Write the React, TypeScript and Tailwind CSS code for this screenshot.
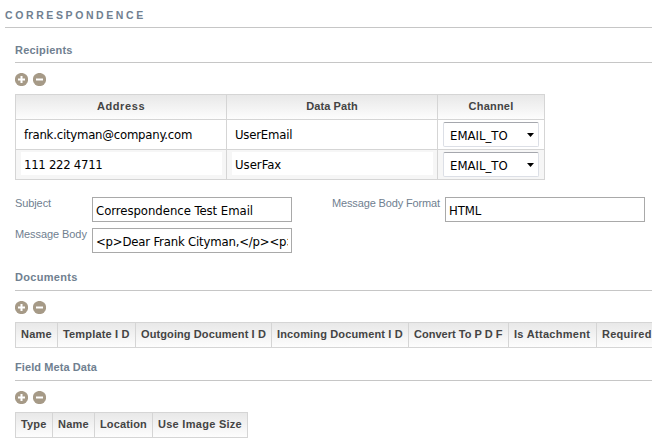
const label = "font-['Liberation_Sans',Arial,sans-serif] text-[11px] leading-[14px] whitespace-pre";
const value = "font-['DejaVu_Sans_Condensed','DejaVu_Sans',sans-serif] [font-stretch:condensed] text-[13px] leading-[16px] text-black whitespace-pre";

function Tools() {
  return (
    <div className="mt-[10px] flex h-[13px] gap-[5px]">
      {[true, false].map((plus) => (
        <svg key={String(plus)} width="13" height="13" viewBox="0 0 13 13" aria-hidden="true">
          <circle cx="6.5" cy="6.5" r="6.6" fill="#a69a87" />
          <path d={plus ? "M3 6.5h7M6.5 3v7" : "M3 6.5h7"} stroke="#fff" strokeWidth="2" fill="none" />
        </svg>
      ))}
    </div>
  );
}

function Heading({ text, height, track }: { text: string; height: string; track: string }) {
  return (
    <div className={`${height} border-b border-[#c6c6c6]`}>
      <h2 className={`${label} ${track} font-bold text-[#708090]`}>{text}</h2>
    </div>
  );
}

function Head({ text, width, track, center }: { text: string; width: string; track: string; center?: boolean }) {
  return (
    <div
      className={`${width} h-[24px] shrink-0 border-r border-[#d5d5d5] bg-linear-to-b from-[#e8e8e8] to-[#fdfdfd] pt-[4px] ${center ? "text-center" : "pl-[5px]"} ${label} ${track} font-bold text-[#444]`}
    >
      {text}
    </div>
  );
}

function Channel() {
  return (
    <div className="flex h-[25px] w-[96px] items-center justify-between rounded-[2px] border border-[#dcdfe6] border-t-[#a5a7ad] bg-white pr-[4px] pl-[6px]">
      <span className={`${value} pt-[2px]`}>EMAIL_TO</span>
      <svg width="7" height="4" viewBox="0 0 7 4" aria-hidden="true">
        <path d="M0 0h7L3.5 4z" fill="#000" />
      </svg>
    </div>
  );
}

function Row({ address, path, shaded, tracks }: { address: string; path: string; shaded?: boolean; tracks: string[] }) {
  const cell = "h-[29px] border-r border-[#d5d5d5] pl-[5px] pt-[2px]";
  return (
    <div className={`flex border-t border-[#d5d5d5] ${shaded ? "bg-[#f6f6f6]" : "bg-white"}`}>
      {[address, path].map((text, i) => (
        <div key={text} className={`${cell} w-[211px]`}>
          <div className={`h-[23px] w-[201px] bg-white pt-[5px] pl-[3px] ${value} ${tracks[i]}`}>{text}</div>
        </div>
      ))}
      <div className={`${cell} w-[107px]`}>
        <Channel />
      </div>
    </div>
  );
}

function Field({ name, text, labelWidth, track, nameTrack }: { name: string; text: string; labelWidth: string; track: string; nameTrack: string }) {
  return (
    <div className="flex">
      <label className={`${label} ${labelWidth} ${nameTrack} -mt-px shrink-0 text-[#708090]`}>{name}</label>
      <div className="h-[25px] w-[200px] border border-[#a9a9a9] bg-white px-[3px]">
        <div className={`${value} ${track} overflow-hidden pt-[5px]`}>{text}</div>
      </div>
    </div>
  );
}

export default function App() {
  return (
    <main className="h-[446px] w-[652px] overflow-hidden bg-white pl-[5px]">
      <h1 className="h-[28px] border-b border-[#c6c6c6] pt-[8px] font-['Liberation_Sans',Arial,sans-serif] text-[10.5px] leading-[14px] font-bold tracking-[2.6px] text-[#708090]">
        CORRESPONDENCE
      </h1>
      <div className="pl-[10px]">
        <section className="pt-[15px]">
          <Heading text="Recipients" height="h-[20px]" track="tracking-[0.2px]" />
          <Tools />
          <div className="mt-[8px] w-[530px] border-t border-b border-l border-[#d5d5d5]">
            <div className="flex">
              <Head text="Address" width="w-[211px]" track="tracking-[0.6px]" center />
              <Head text="Data Path" width="w-[211px]" track="tracking-[0.1px]" center />
              <Head text="Channel" width="w-[107px]" track="tracking-[0.2px]" center />
            </div>
            <Row address="frank.cityman@company.com" path="UserEmail" tracks={["tracking-[-0.22px]", "tracking-[-0.2px]"]} />
            <Row address="111 222 4711" path="UserFax" shaded tracks={["tracking-[-0.28px]", "tracking-[0px]"]} />
          </div>
        </section>
        <section className="mt-[17px] flex h-[56px] gap-[40px]">
          <div className="flex flex-col gap-[6px]">
            <Field name="Subject" text="Correspondence Test Email" labelWidth="w-[77px]" track="tracking-[-0.04px]" nameTrack="tracking-[-0.1px]" />
            <Field name="Message Body" text="<p>Dear Frank Cityman,</p><p>" labelWidth="w-[77px]" track="tracking-[-0.18px]" nameTrack="tracking-[-0.08px]" />
          </div>
          <Field name="Message Body Format" text="HTML" labelWidth="w-[113px]" track="tracking-[-0.1px]" nameTrack="tracking-[-0.14px]" />
        </section>
        <section className="pt-[17px]">
          <Heading text="Documents" height="h-[21px]" track="tracking-[0.3px]" />
          <Tools />
          <div className="mt-[8px] flex h-[26px] border-t border-b border-l border-[#d5d5d5]">
            <Head text="Name" width="w-[42px]" track="tracking-[0.2px]" />
            <Head text="Template I D" width="w-[78px]" track="tracking-[0.16px]" />
            <Head text="Outgoing Document I D" width="w-[136px]" track="tracking-[0.1px]" />
            <Head text="Incoming Document I D" width="w-[137px]" track="tracking-[0.14px]" />
            <Head text="Convert To P D F" width="w-[100px]" track="tracking-[0.02px]" />
            <Head text="Is Attachment" width="w-[88px]" track="tracking-[0.3px]" />
            <Head text="Required" width="w-[60px]" track="tracking-[0.24px]" />
          </div>
        </section>
        <section className="pt-[12px]">
          <Heading text="Field Meta Data" height="h-[21px]" track="tracking-[0.08px]" />
          <Tools />
          <div className="mt-[8px] flex h-[26px] w-[233px] border-t border-b border-l border-[#d5d5d5]">
            <Head text="Type" width="w-[37px]" track="tracking-[0.15px]" />
            <Head text="Name" width="w-[42px]" track="tracking-[0.2px]" />
            <Head text="Location" width="w-[58px]" track="tracking-[0.14px]" />
            <Head text="Use Image Size" width="w-[95px]" track="tracking-[0.28px]" />
          </div>
        </section>
      </div>
    </main>
  );
}
